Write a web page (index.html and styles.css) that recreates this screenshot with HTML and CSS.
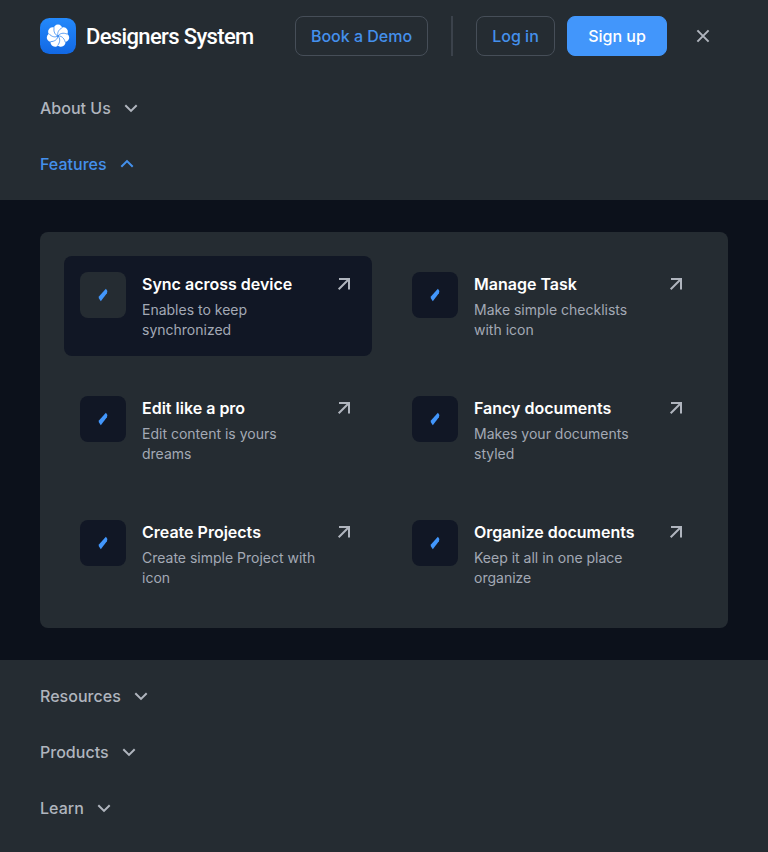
FILE: index.html
```html
<!DOCTYPE html>
<html lang="en">
<head>
<meta charset="utf-8">
<title>Designers System</title>
<link rel="stylesheet" href="styles.css">
</head>
<body>
<svg width="0" height="0" class="defs" aria-hidden="true">
  <symbol id="chevron" viewBox="0 0 24 24"><path d="M6.3 9.2 12 14.9l5.7-5.7" fill="none" stroke="currentColor" stroke-width="2"/></symbol>
  <symbol id="arrow" viewBox="0 0 24 24"><path d="M7 7h10v10.5M17 7 6.7 17.3" fill="none" stroke="currentColor" stroke-width="2"/></symbol>
  <symbol id="slash" viewBox="0 0 10 14"><path d="M7.9.7 9.4 2.9 8.9 5.2 2.8 13.3.7 10 .9 8.6z" fill="currentColor"/></symbol>
  <symbol id="close" viewBox="0 0 24 24"><path d="m6.4 6.4 11.2 11.2M17.6 6.4 6.4 17.6" fill="none" stroke="currentColor" stroke-width="2"/></symbol>
</svg>
<header class="header">
  <a class="brand">
    <svg class="logo" viewBox="0 0 36 36">
      <defs>
        <linearGradient id="blue" x1="0" y1="0" x2="0" y2="1"><stop offset="0" stop-color="#2489fb"/><stop offset="1" stop-color="#1268e4"/></linearGradient>
        <circle id="lobe" cx="18" cy="11.1" r="4.5"/>
        <path id="gap" d="M18 18C17 15 18.4 11.6 22.4 9.6"/>
      </defs>
      <rect width="36" height="36" rx="9.5" fill="url(#blue)"/>
      <g fill="#fff">
        <circle cx="18" cy="18" r="8"/>
        <use href="#lobe"/>
        <use href="#lobe" transform="rotate(51.43 18 18)"/>
        <use href="#lobe" transform="rotate(102.86 18 18)"/>
        <use href="#lobe" transform="rotate(154.29 18 18)"/>
        <use href="#lobe" transform="rotate(205.71 18 18)"/>
        <use href="#lobe" transform="rotate(257.14 18 18)"/>
        <use href="#lobe" transform="rotate(308.57 18 18)"/>
      </g>
      <g fill="none" stroke="#1b79f0" stroke-width=".65">
        <use href="#gap"/>
        <use href="#gap" transform="rotate(51.43 18 18)"/>
        <use href="#gap" transform="rotate(102.86 18 18)"/>
        <use href="#gap" transform="rotate(154.29 18 18)"/>
        <use href="#gap" transform="rotate(205.71 18 18)"/>
        <use href="#gap" transform="rotate(257.14 18 18)"/>
        <use href="#gap" transform="rotate(308.57 18 18)"/>
      </g>
    </svg>
    <span class="name">Designers System</span>
  </a>
  <a class="btn demo">Book a Demo</a>
  <span class="divider"></span>
  <a class="btn login">Log in</a>
  <a class="btn signup">Sign up</a>
  <svg class="icon close"><use href="#close"/></svg>
</header>
<nav>
  <div class="links">
    <a class="link">About Us<svg class="icon"><use href="#chevron"/></svg></a>
    <a class="link open">Features<svg class="icon"><use href="#chevron"/></svg></a>
  </div>
  <section class="features">
    <div class="panel">
      <a class="item active"><span class="tile"><svg><use href="#slash"/></svg></span><div class="text"><h3>Sync across device</h3><p>Enables to keep<br>synchronized</p></div><svg class="icon"><use href="#arrow"/></svg></a>
      <a class="item"><span class="tile"><svg><use href="#slash"/></svg></span><div class="text"><h3>Manage Task</h3><p>Make simple checklists<br>with icon</p></div><svg class="icon"><use href="#arrow"/></svg></a>
      <a class="item"><span class="tile"><svg><use href="#slash"/></svg></span><div class="text"><h3>Edit like a pro</h3><p>Edit content is yours<br>dreams</p></div><svg class="icon"><use href="#arrow"/></svg></a>
      <a class="item"><span class="tile"><svg><use href="#slash"/></svg></span><div class="text"><h3>Fancy documents</h3><p>Makes your documents<br>styled</p></div><svg class="icon"><use href="#arrow"/></svg></a>
      <a class="item"><span class="tile"><svg><use href="#slash"/></svg></span><div class="text"><h3>Create Projects</h3><p>Create simple Project with<br>icon</p></div><svg class="icon"><use href="#arrow"/></svg></a>
      <a class="item"><span class="tile"><svg><use href="#slash"/></svg></span><div class="text"><h3>Organize documents</h3><p>Keep it all in one place<br>organize</p></div><svg class="icon"><use href="#arrow"/></svg></a>
    </div>
  </section>
  <div class="links">
    <a class="link">Resources<svg class="icon"><use href="#chevron"/></svg></a>
    <a class="link">Products<svg class="icon"><use href="#chevron"/></svg></a>
    <a class="link">Learn<svg class="icon"><use href="#chevron"/></svg></a>
  </div>
</nav>
</body>
</html>
```
FILE: styles.css
```css
* { box-sizing: border-box; margin: 0; }
body {
  background: #252c32;
  color: #b0b5be;
  font-family: Inter, sans-serif;
  min-height: 852px;
}
.defs { display: none; }
.icon { width: 24px; height: 24px; flex: none; }
.header {
  display: flex;
  align-items: center;
  height: 72px;
  padding: 0 40px;
}
.brand { display: flex; align-items: center; gap: 10px; width: 255px; }
.logo { width: 36px; height: 36px; flex: none; }
.name {
  padding-top: 2px;
  color: #fff;
  font: 500 22px/28px Roboto, sans-serif;
  letter-spacing: -0.64px;
  white-space: nowrap;
}
.btn {
  display: flex;
  align-items: center;
  justify-content: center;
  height: 40px;
  border: 1px solid #464e58;
  border-radius: 8px;
  color: #4490ec;
  font-size: 16px;
  font-weight: 500;
  white-space: nowrap;
}
.demo { width: 133px; }
.divider { width: 2px; height: 40px; margin: 0 23px; background: #3b424b; }
.login { width: 79px; }
.signup { width: 100px; margin-left: 12px; background: #4296fb; border-color: #4296fb; color: #fff; }
.close { margin-left: 24px; }
.links { padding: 8px 40px; }
.link {
  display: flex;
  align-items: center;
  gap: 8px;
  height: 56px;
  font-size: 16px;
  font-weight: 500;
  letter-spacing: 0.02px;
}
.open { color: #4490ec; }
.open .icon { transform: rotate(180deg); }
.features { padding: 32px 40px; background: #0c111b; }
.panel {
  display: grid;
  grid-template-columns: 1fr 1fr;
  grid-auto-rows: 100px;
  gap: 24px;
  padding: 24px;
  border-radius: 8px;
  background: #252c32;
}
.item { display: flex; align-items: flex-start; padding: 16px; border-radius: 8px; }
.tile {
  display: flex;
  align-items: center;
  justify-content: center;
  flex: none;
  width: 46px;
  height: 46px;
  margin-right: 16px;
  border-radius: 8px;
  background: #111725;
}
.tile svg { width: 10px; height: 14px; color: #4296fb; }
.active { background: #111725; }
.active .tile { background: #252c32; }
.text { flex: 1; min-width: 0; white-space: nowrap; }
h3 { color: #fff; font-size: 16px; font-weight: 600; line-height: 24px; }
p { margin-top: 4px; color: #a3a9b5; font-size: 14px; line-height: 20px; }
```
